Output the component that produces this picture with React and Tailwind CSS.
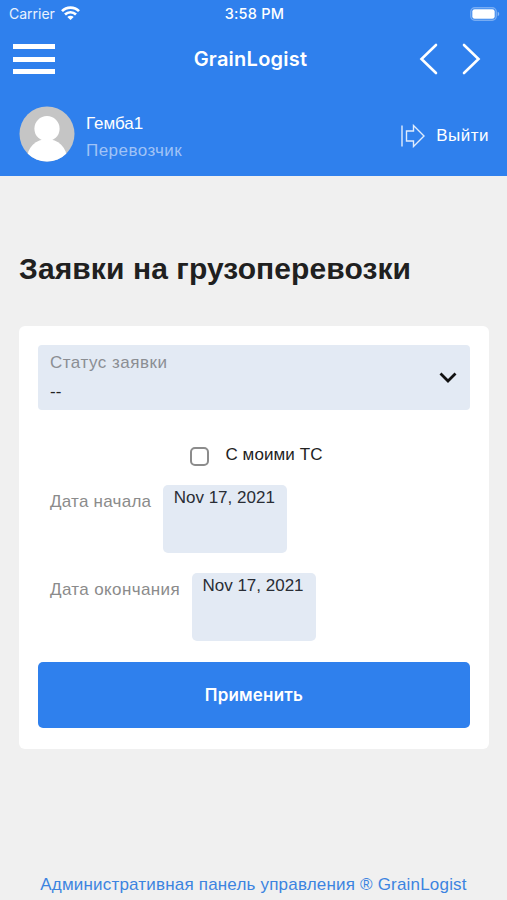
import React, { useState } from "react";

const StatusBar = () => (
  <div className="flex h-7 items-center justify-between pl-[9px] pr-[7px] font-['Inter',sans-serif] text-[14px] leading-7">
    <div className="flex w-40 items-center gap-[6px]">
      <span className="text-white/90">Carrier</span>
      <svg className="mb-[2px] h-[14px] w-[19px]" viewBox="0 0 19 14" fill="none" stroke="#fff" strokeWidth="2.7">
        <path d="M1 5.1C5.6 .5 13.4 .5 18 5.1" />
        <path d="M4 8.5C7.2 5.5 11.8 5.5 15 8.5" />
        <path d="M9.5 14L6.3 11C8.2 9.3 10.8 9.3 12.7 11Z" fill="#fff" stroke="none" />
      </svg>
    </div>
    <span className="text-[14.5px] font-medium tracking-[0.25px] text-white">3:58 PM</span>
    <div className="flex w-40 justify-end">
      <svg className="h-[14px] w-[30px]" viewBox="0 0 30 14">
        <rect x=".8" y=".8" width="25.4" height="12.4" rx="4" fill="none" stroke="#fff" strokeOpacity=".35" strokeWidth="1.4" />
        <rect x="2.3" y="2.3" width="22.4" height="9.4" rx="2.3" fill="#fff" />
        <path d="M27.7 4.8C29.7 5.5 29.7 8.5 27.7 9.2Z" fill="#fff" fillOpacity=".45" />
      </svg>
    </div>
  </div>
);

const DateField = ({ label, value, labelClass }) => (
  <div className="flex h-[68px] items-start gap-3 pl-3">
    <label className={`pt-[7px] text-[17px] leading-5 text-[#8b8b8b] ${labelClass}`}>{label}</label>
    <button className="flex h-[68px] w-[124px] justify-center rounded-[5px] bg-[#e3eaf4] pr-[2px] pt-[3px] text-[17px] leading-5 text-[#292d35]">
      {value}
    </button>
  </div>
);

export default function App() {
  const [withMyVehicles, setWithMyVehicles] = useState(false);

  return (
    <div className="flex h-[900px] w-full flex-col overflow-hidden bg-[#f0f0f0] font-['Liberation_Sans',sans-serif]">
      {/* Header */}
      <header className="h-[176px] shrink-0 bg-[#2f80ed] text-white">
        <StatusBar />

        <div className="flex h-[62px] items-center justify-between pl-[13px] pr-[26px]">
          <button className="flex w-[100px] flex-col gap-[7.5px]">
            <span className="h-[5px] w-[42px] bg-white" />
            <span className="h-[5px] w-[42px] bg-white" />
            <span className="h-[5px] w-[42px] bg-white" />
          </button>
          <h1 className="font-['Inter',sans-serif] text-[20px] font-semibold leading-6 tracking-[0.25px]">GrainLogist</h1>
          <div className="flex w-[93px] justify-end">
            <svg className="h-8 w-[62px]" viewBox="0 0 62 32" fill="none" stroke="#fff" strokeWidth="2.6" strokeLinecap="round">
              <path d="M17 2L2.5 16L17 30" />
              <path d="M45 2L59.5 16L45 30" />
            </svg>
          </div>
        </div>

        {/* User */}
        <div className="flex h-[56px] items-center pl-[19px] pr-[18px] mt-[15.5px]">
          <svg className="h-[56px] w-[56px]" viewBox="0 0 56 56">
            <clipPath id="avatar">
              <circle cx="28" cy="28" r="27.5" />
            </clipPath>
            <g clipPath="url(#avatar)">
              <rect width="56" height="56" fill="#c5c5c5" />
              <circle cx="28" cy="22.7" r="12.6" fill="#fff" />
              <ellipse cx="28" cy="53" rx="20" ry="20" fill="#fff" />
            </g>
          </svg>
          <div className="ml-[11px] flex-1 pt-[7px] text-[17px] leading-[27px]">
            <p className="text-white">Гемба1</p>
            <p className="tracking-[0.45px] text-[#a0c3f6]">Перевозчик</p>
          </div>
          <button className="flex items-center gap-[10px] pt-[4px] text-[17px] leading-6">
            <svg className="h-6 w-[25px]" viewBox="0 0 25 24" fill="none" stroke="#fff" strokeWidth="1.4" strokeOpacity=".85">
              <path d="M1 1.5V22.5" />
              <path d="M5.5 7H12.5V1.5L23 12L12.5 22.5V17H5.5Z" />
            </svg>
            <span className="tracking-[0.5px]">Выйти</span>
          </button>
        </div>
      </header>

      {/* Orders filter */}
      <main className="flex-1 pl-[19px] pr-[18px] pt-[75px]">
        <h2 className="text-[30px] font-bold leading-9 tracking-[0.1px] text-[#202020]">Заявки на грузоперевозки</h2>

        <div className="mt-[39px] h-[423px] rounded-[6px] bg-white px-[19px] pt-[19px]">
          <div className="flex h-[65px] items-center justify-between rounded-[4px] bg-[#e3eaf4] pl-3 pr-[13px] text-[17px]">
            <div className="pb-[2px]">
              <p className="leading-[29px] tracking-[0.5px] text-[#8b8e93]">Статус заявки</p>
              <p className="leading-[29px] text-[#222]">--</p>
            </div>
            <svg className="h-[11px] w-[18px]" viewBox="0 0 18 11" fill="none" stroke="#111" strokeWidth="2.8">
              <path d="M1.5 1.5L9 9L16.5 1.5" />
            </svg>
          </div>

          <label className="mt-[33px] flex items-center justify-center gap-4 pl-[5px] text-[17px] leading-6 text-[#222]">
            <input
              type="checkbox"
              checked={withMyVehicles}
              onChange={(e) => setWithMyVehicles(e.target.checked)}
              className="mt-[2px] h-[19px] w-[19px] appearance-none rounded-[5px] border-2 border-[#8c8c8c] bg-white"
            />
            <span className="tracking-[0.1px]">С моими ТС</span>
          </label>

          <div className="mt-[18px] flex flex-col gap-5">
            <DateField label="Дата начала" value="Nov 17, 2021" labelClass="tracking-[0.25px]" />
            <DateField label="Дата окончания" value="Nov 17, 2021" labelClass="tracking-[0.38px]" />
          </div>

          <button className="mt-[21px] h-[66px] w-full rounded-[5px] bg-[#2f80ed] pt-[2px] font-['Inter',sans-serif] text-[17px] font-semibold tracking-[0.2px] text-white">
            Применить
          </button>
        </div>
      </main>

      <footer className="h-[27px] shrink-0 text-center text-[17px] leading-6 tracking-[0.19px] text-[#3c84e0]">
        Административная панель управления ® GrainLogist
      </footer>
    </div>
  );
}
